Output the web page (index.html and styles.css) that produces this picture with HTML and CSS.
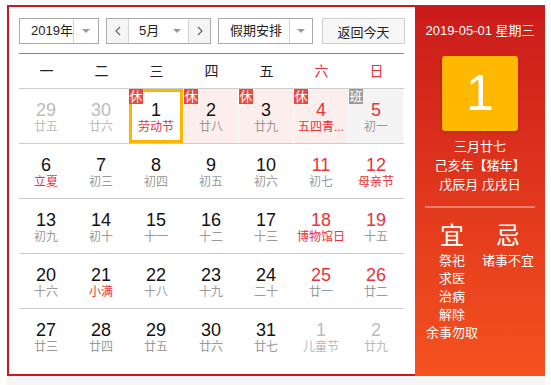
FILE: index.html
```html
<!DOCTYPE html>
<html lang="zh-CN">

<head>
  <meta charset="UTF-8">
  <meta name="viewport" content="width=device-width, initial-scale=1.0">
  <title>万年历</title>
  <link rel="stylesheet" href="styles.css">
</head>

<body>
  <div class="page">
    <div class="calendar">
      <div class="main">
        <div class="toolbar">
          <div class="select year">
            <span class="value">2019年</span>
            <span class="arrow"><i></i></span>
          </div>
          <div class="month-group">
            <button type="button" class="step">
              <svg width="6" height="10" viewBox="0 0 6 10"><polyline points="5,1 1,5 5,9" fill="none" stroke="#666" stroke-width="1.2"/></svg>
            </button>
            <div class="select month">
              <span class="value">5月</span>
              <span class="arrow"><i></i></span>
            </div>
            <button type="button" class="step">
              <svg width="6" height="10" viewBox="0 0 6 10"><polyline points="1,1 5,5 1,9" fill="none" stroke="#666" stroke-width="1.2"/></svg>
            </button>
          </div>
          <div class="select holiday">
            <span class="value">假期安排</span>
            <span class="arrow"><i></i></span>
          </div>
          <button type="button" class="today">返回今天</button>
        </div>

        <div class="week">
          <span>一</span><span>二</span><span>三</span><span>四</span><span>五</span>
          <span class="red">六</span><span class="red">日</span>
        </div>

        <div class="days">
          <div class="row">
            <div class="cell other"><div class="num">29</div><div class="lunar">廿五</div></div>
            <div class="cell other"><div class="num">30</div><div class="lunar">廿六</div></div>
            <div class="cell selected"><i class="badge">休</i><div class="num">1</div><div class="lunar red">劳动节</div></div>
            <div class="cell rest"><i class="badge">休</i><div class="num">2</div><div class="lunar">廿八</div></div>
            <div class="cell rest"><i class="badge">休</i><div class="num">3</div><div class="lunar">廿九</div></div>
            <div class="cell rest weekend"><i class="badge">休</i><div class="num">4</div><div class="lunar red">五四青...</div></div>
            <div class="cell work weekend"><i class="badge">班</i><div class="num">5</div><div class="lunar">初一</div></div>
          </div>
          <div class="row">
            <div class="cell"><div class="num">6</div><div class="lunar red">立夏</div></div>
            <div class="cell"><div class="num">7</div><div class="lunar">初三</div></div>
            <div class="cell"><div class="num">8</div><div class="lunar">初四</div></div>
            <div class="cell"><div class="num">9</div><div class="lunar">初五</div></div>
            <div class="cell"><div class="num">10</div><div class="lunar">初六</div></div>
            <div class="cell weekend"><div class="num">11</div><div class="lunar">初七</div></div>
            <div class="cell weekend"><div class="num">12</div><div class="lunar red">母亲节</div></div>
          </div>
          <div class="row">
            <div class="cell"><div class="num">13</div><div class="lunar">初九</div></div>
            <div class="cell"><div class="num">14</div><div class="lunar">初十</div></div>
            <div class="cell"><div class="num">15</div><div class="lunar">十一</div></div>
            <div class="cell"><div class="num">16</div><div class="lunar">十二</div></div>
            <div class="cell"><div class="num">17</div><div class="lunar">十三</div></div>
            <div class="cell weekend"><div class="num">18</div><div class="lunar red">博物馆日</div></div>
            <div class="cell weekend"><div class="num">19</div><div class="lunar">十五</div></div>
          </div>
          <div class="row">
            <div class="cell"><div class="num">20</div><div class="lunar">十六</div></div>
            <div class="cell"><div class="num">21</div><div class="lunar red">小满</div></div>
            <div class="cell"><div class="num">22</div><div class="lunar">十八</div></div>
            <div class="cell"><div class="num">23</div><div class="lunar">十九</div></div>
            <div class="cell"><div class="num">24</div><div class="lunar">二十</div></div>
            <div class="cell weekend"><div class="num">25</div><div class="lunar">廿一</div></div>
            <div class="cell weekend"><div class="num">26</div><div class="lunar">廿二</div></div>
          </div>
          <div class="row">
            <div class="cell"><div class="num">27</div><div class="lunar">廿三</div></div>
            <div class="cell"><div class="num">28</div><div class="lunar">廿四</div></div>
            <div class="cell"><div class="num">29</div><div class="lunar">廿五</div></div>
            <div class="cell"><div class="num">30</div><div class="lunar">廿六</div></div>
            <div class="cell"><div class="num">31</div><div class="lunar">廿七</div></div>
            <div class="cell other"><div class="num">1</div><div class="lunar">儿童节</div></div>
            <div class="cell other"><div class="num">2</div><div class="lunar">廿九</div></div>
          </div>
        </div>
      </div>

      <div class="side">
        <div class="date">2019-05-01 星期三</div>
        <div class="big-day">1</div>
        <div class="lunar-info">
          <p>三月廿七</p>
          <p>己亥年【猪年】</p>
          <p>戊辰月 戊戌日</p>
        </div>
        <div class="line"></div>
        <div class="almanac">
          <div class="col">
            <h3>宜</h3>
            <p>祭祀</p>
            <p>求医</p>
            <p>治病</p>
            <p>解除</p>
            <p>余事勿取</p>
          </div>
          <div class="col">
            <h3>忌</h3>
            <p>诸事不宜</p>
          </div>
        </div>
      </div>
    </div>
    <div class="bar"></div>
  </div>
</body>

</html>
```

FILE: styles.css
```css
body {
  margin: 0;
  font-family: "Liberation Sans", "Noto Sans CJK SC", sans-serif;
  color: #111;
  background-color: #fff;
}

.page {
  padding: 5px 0 0 7px;
}

.calendar {
  display: flex;
  width: 538px;
  height: 371px;
}

.main {
  width: 406px;
  border: 2px solid #c9181e;
  border-right: none;
}

/* 顶部工具条 */
.toolbar {
  display: flex;
  height: 26px;
  margin: 11px 0 0 10px;
  font-size: 13px;
}

.toolbar button {
  padding: 0;
  font: inherit;
  outline: none;
  cursor: pointer;
}

.select {
  display: flex;
  box-sizing: border-box;
  height: 26px;
  border: 1px solid #a9a9a9;
  line-height: 24px;
  color: #222;
}

.select .value {
  flex: 1;
  padding-left: 11px;
}

.select .arrow {
  display: flex;
  align-items: center;
  justify-content: center;
  width: 22px;
}

.select .arrow i {
  width: 0;
  height: 0;
  border-left: 4px solid transparent;
  border-right: 4px solid transparent;
  border-top: 4px solid #999;
}

.select.year {
  width: 80px;
}

.select.year .arrow,
.select.holiday .arrow {
  border-left: 1px solid #d4d4d4;
}

.select.year .arrow {
  width: 24px;
}

.select.holiday {
  width: 95px;
  margin-left: 7px;
}

.month-group {
  display: flex;
  box-sizing: border-box;
  width: 105px;
  height: 26px;
  margin-left: 7px;
  border: 1px solid #a9a9a9;
}

.month-group .step {
  width: 22px;
  height: 24px;
  border: none;
  background-color: #f5f5f5;
}

.month-group .step:first-child {
  border-right: 1px solid #d4d4d4;
}

.month-group .step:last-child {
  border-left: 1px solid #d4d4d4;
}

.month-group .select {
  width: 59px;
  height: 24px;
  border: none;
  line-height: 24px;
}

.month-group .select .value {
  padding-left: 10px;
}

.today {
  width: 83px;
  height: 26px;
  margin-left: 9px;
  border: 1px solid #cfcfcf;
  background-color: #f7f7f7;
  color: #222;
}

/* 星期 */
.week {
  display: flex;
  width: 385px;
  margin: 9px 0 0 10px;
  border-top: 1px solid #f05a4a;
  font-size: 14px;
  line-height: 34px;
  color: #222;
}

.week span {
  width: 55px;
  text-align: center;
}

.red {
  color: #e8333a;
}

/* 日期格子 */
.days {
  width: 385px;
  margin-left: 10px;
}

.days .row {
  display: grid;
  grid-template-columns: repeat(7, 54px);
  column-gap: 1px;
  border-top: 1px solid #cdcdcd;
}

.cell {
  position: relative;
  box-sizing: border-box;
  height: 54px;
  padding-top: 11px;
  text-align: center;
  cursor: pointer;
}

.cell .num {
  font-size: 18px;
  line-height: 20px;
}

.cell .lunar {
  font-size: 12px;
  line-height: 15px;
  color: #999;
  white-space: nowrap;
}

.cell .lunar.red {
  color: #e8333a;
}

.cell.weekend .num {
  color: #e8333a;
}

.cell.other .num,
.cell.other .lunar {
  color: #bbb;
}

.cell.rest {
  background-color: #fdeeee;
}

.cell.work {
  background-color: #f4f4f4;
}

.cell.selected {
  padding-top: 8px;
  border: 3px solid #ffb400;
}

.cell .badge {
  position: absolute;
  top: 0;
  left: 0;
  width: 14px;
  height: 15px;
  font-style: normal;
  font-size: 13px;
  line-height: 15px;
  color: #fff;
  background-color: #f0463b;
}

.cell.selected .badge {
  top: -3px;
  left: -3px;
}

.cell.work .badge {
  background-color: #9c9c9c;
}

/* 右侧详情 */
.side {
  width: 130px;
  padding-top: 18px;
  box-sizing: border-box;
  background: linear-gradient(#ca1b1b, #f5521f);
  color: #fff;
  text-align: center;
}

.side .date {
  font-size: 13px;
  line-height: 16px;
}

.big-day {
  width: 76px;
  height: 75px;
  margin: 17px auto 0;
  border-radius: 3px;
  background-color: #ffb800;
  box-shadow: 0 1px 3px rgba(120, 0, 0, .35);
  font-size: 50px;
  line-height: 75px;
}

.lunar-info {
  margin-top: 6px;
  font-size: 13px;
  line-height: 19px;
}

.side p {
  margin: 0;
}

.side .line {
  height: 2px;
  margin: 12px 10px 0;
  background-color: rgba(255, 255, 255, .35);
}

.almanac {
  display: flex;
  padding: 0 9px;
  margin-top: 13px;
}

.almanac .col {
  width: 56px;
  font-size: 13px;
  line-height: 18px;
}

.almanac h3 {
  margin: 0 0 1px;
  font-size: 24px;
  font-weight: normal;
  line-height: 30px;
}

.bar {
  width: 538px;
  height: 10px;
  background-color: #f5f5f5;
}
```
